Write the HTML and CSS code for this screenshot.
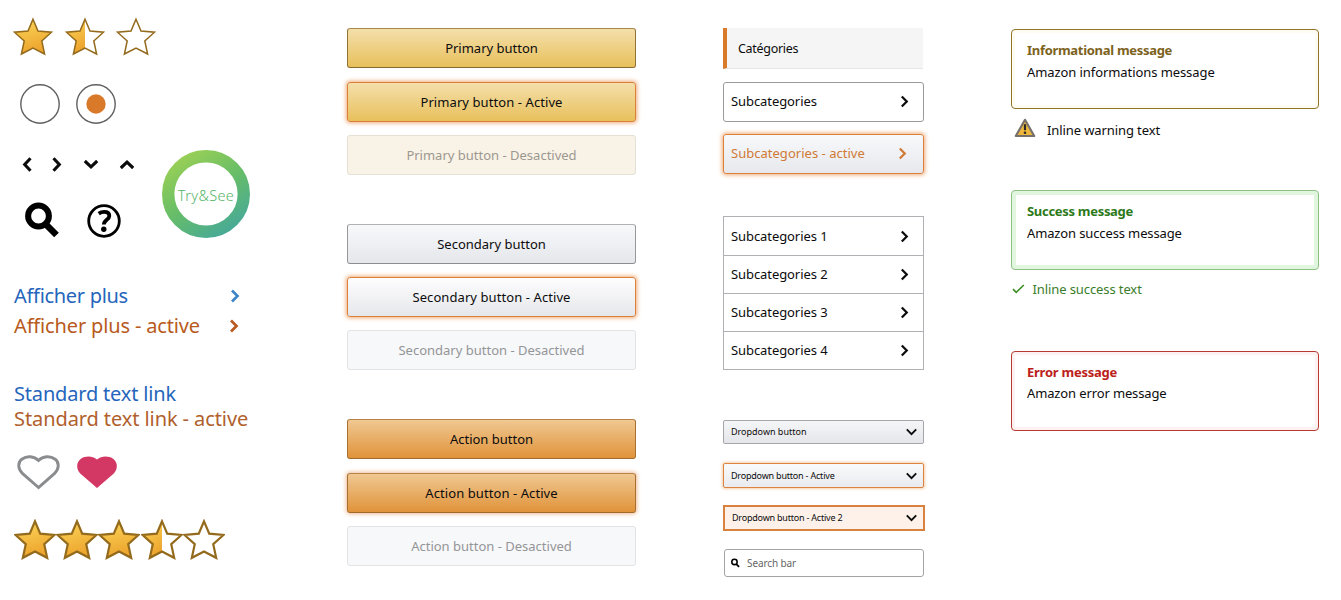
FILE: index.html
```
<!DOCTYPE html>
<html lang="fr">
<head>
<meta charset="utf-8">
<title>UI components</title>
<link rel="stylesheet" href="styles.css">
</head>
<body>
<svg class="defs" width="0" height="0" aria-hidden="true">
  <defs>
    <linearGradient id="gold" x1="0" y1="0" x2="0.3" y2="1"><stop offset="0" stop-color="#fbd65b"/><stop offset="1" stop-color="#eda52e"/></linearGradient>
    <linearGradient id="ring" gradientUnits="userSpaceOnUse" x1="18" y1="8" x2="66" y2="82"><stop offset="0" stop-color="#98cf56"/><stop offset="0.5" stop-color="#67bd68"/><stop offset="1" stop-color="#48aa96"/></linearGradient>
    <path id="star-shape" d="M20 2.200 25 14 38.500 15.200 28.800 24 31.600 37 20 31 8.400 37 11.200 24 1.500 15.200 15 14Z"/>
    <path id="star-half" d="M20 2.200V31L8.400 37 11.200 24 1.500 15.200 15 14Z"/>
    <symbol id="star-full-i" viewBox="0 0 40 40"><use href="#star-shape" fill="url(#gold)" stroke="#946a1c"/></symbol>
    <symbol id="star-half-i" viewBox="0 0 40 40"><use href="#star-half" fill="url(#gold)"/><use href="#star-shape" fill="none" stroke="#946a1c"/></symbol>
    <symbol id="star-empty-i" viewBox="0 0 40 40"><use href="#star-shape" fill="none" stroke="#946a1c"/></symbol>
    <symbol id="chev" viewBox="0 0 10 14"><path d="M2 1.500 7.500 7 2 12.500" fill="none" stroke="currentColor"/></symbol>
    <symbol id="chev-wide" viewBox="0 0 10 15"><path d="M1.500 1.300 7.300 7.500 1.500 13.700" fill="none" stroke="currentColor"/></symbol>
    <symbol id="mag" viewBox="0 0 35 36"><circle cx="13.500" cy="14" r="10.400" fill="none" stroke="currentColor" stroke-width="6"/><path d="M20.500 22 31.500 33" stroke="currentColor" stroke-width="6.600"/></symbol>
  </defs>
</svg>
<main class="board">
  <section class="col-icons">
    <div class="stars stars-thin">
      <svg><use href="#star-full-i"/></svg><svg><use href="#star-half-i"/></svg><svg><use href="#star-empty-i"/></svg>
    </div>
    <div class="radios">
      <svg viewBox="0 0 40 40"><circle class="radio-rim" cx="20" cy="20" r="19.200"/></svg>
      <svg viewBox="0 0 40 40"><circle class="radio-rim" cx="20" cy="20" r="19.200"/><circle cx="20" cy="20" r="9.700" fill="#d97a2b"/></svg>
    </div>
    <div class="glyphs">
      <div class="glyph-set">
        <div class="arrows">
          <svg class="chev left"><use href="#chev-wide"/></svg>
          <svg class="chev"><use href="#chev-wide"/></svg>
          <svg class="chev down"><use href="#chev-wide"/></svg>
          <svg class="chev up"><use href="#chev-wide"/></svg>
        </div>
        <div class="tools">
          <svg class="mag"><use href="#mag"/></svg>
          <svg class="help" viewBox="0 0 34 34"><circle cx="17" cy="17" r="15.300" fill="none" stroke="#000" stroke-width="2.800"/><path d="M11.700 9.600C13.600 8.300 15.400 7.900 17.200 7.900c3.300 0 5.100 1.500 5.100 4 0 3.800-5.400 3.900-5.400 8.500" fill="none" stroke="#000" stroke-width="3.800"/><circle cx="16.800" cy="25.200" r="2.700"/></svg>
        </div>
      </div>
      <div class="ring">
        <svg viewBox="0 0 88 88"><circle cx="44" cy="44" r="37.800" fill="none" stroke="url(#ring)" stroke-width="12.400"/></svg>
        <span>Try&amp;See</span>
      </div>
    </div>
    <div class="more"><span class="narrow">Afficher plus</span><svg class="chev"><use href="#chev"/></svg></div>
    <div class="more more-active"><span>Afficher plus - active</span><svg class="chev"><use href="#chev"/></svg></div>
    <div class="links">
      <a class="link">Standard text link</a>
      <a class="link link-active">Standard text link - active</a>
    </div>
    <div class="hearts">
      <svg class="heart" viewBox="0 0 43 36"><path d="M21.500 32.500 5.400 18.400C.6 13.500.7 7.400 4.800 4.200 9.800.6 17 1 21.500 5.500 26 1 33.200.6 38.200 4.200c4.100 3.200 4.200 9.300-.6 14.200Z" fill="none" stroke="#8a8c8e" stroke-width="2.900"/></svg>
      <svg class="heart-on" viewBox="0 0 40 33"><path d="M20 32 3.200 17.600C-1 13-.8 6.300 3.600 3 8.600-.4 15.500-.2 20 3.600 24.500-.2 31.400-.4 36.400 3c4.400 3.300 4.600 10 .4 14.600Z" fill="#d33865"/></svg>
    </div>
    <div class="stars stars-bold">
      <svg><use href="#star-full-i"/></svg><svg><use href="#star-full-i"/></svg><svg><use href="#star-full-i"/></svg><svg><use href="#star-half-i"/></svg><svg><use href="#star-empty-i"/></svg>
    </div>
  </section>

  <section class="col-buttons">
    <div class="group">
      <button class="btn primary">Primary button</button>
      <button class="btn primary glow">Primary button - Active</button>
      <button class="btn off off-cream">Primary button - Desactived</button>
    </div>
    <div class="group">
      <button class="btn secondary">Secondary button</button>
      <button class="btn secondary glow">Secondary button - Active</button>
      <button class="btn off">Secondary button - Desactived</button>
    </div>
    <div class="group">
      <button class="btn action">Action button</button>
      <button class="btn action glow-soft">Action button - Active</button>
      <button class="btn off">Action button - Desactived</button>
    </div>
  </section>

  <section class="col-menus">
    <h2 class="cat">Catégories</h2>
    <div class="sub sub-box"><span>Subcategories</span><svg class="chev"><use href="#chev"/></svg></div>
    <div class="sub sub-box sub-active"><span>Subcategories - active</span><svg class="chev"><use href="#chev"/></svg></div>
    <div class="sub-list">
      <div class="sub"><span>Subcategories 1</span><svg class="chev"><use href="#chev"/></svg></div>
      <div class="sub"><span>Subcategories 2</span><svg class="chev"><use href="#chev"/></svg></div>
      <div class="sub"><span>Subcategories 3</span><svg class="chev"><use href="#chev"/></svg></div>
      <div class="sub"><span>Subcategories 4</span><svg class="chev"><use href="#chev"/></svg></div>
    </div>
    <div class="drop"><span>Dropdown button</span><svg class="chev down"><use href="#chev"/></svg></div>
    <div class="drop drop-glow"><span>Dropdown button - Active</span><svg class="chev down"><use href="#chev"/></svg></div>
    <div class="drop drop-flat"><span>Dropdown button - Active 2</span><svg class="chev down"><use href="#chev"/></svg></div>
    <div class="search"><svg><use href="#mag"/></svg><span>Search bar</span></div>
  </section>

  <section class="col-messages">
    <div class="msg info"><strong>Informational message</strong><p>Amazon informations message</p></div>
    <div class="inline warn">
      <svg viewBox="0 0 22 20"><path d="M11 1.800 20.200 18H1.800Z" fill="#efb83c" stroke="#77716c" stroke-width="2.200" stroke-linejoin="round"/><path d="M11 6.200v6" stroke="#2d2a26" stroke-width="2.200"/><circle cx="11" cy="14.800" r="1.300" fill="#2d2a26"/></svg>
      <span>Inline warning text</span>
    </div>
    <div class="msg success"><strong>Success message</strong><p>Amazon success message</p></div>
    <div class="inline ok">
      <svg viewBox="0 0 13 10"><path d="M1 5.200 4.200 8.400 11.800 1" fill="none" stroke="#3f8f27" stroke-width="1.700"/></svg>
      <span>Inline success text</span>
    </div>
    <div class="msg error"><strong>Error message</strong><p>Amazon error message</p></div>
  </section>
</main>
</body>
</html>
```
FILE: styles.css
```
* { box-sizing: border-box; }
body {
  margin: 0;
  background: #fff;
  color: #0c0c0c;
  font: 13px/20px "Noto Sans", "Open Sans", sans-serif;
}
svg { display: block; flex: none; }
.defs { position: absolute; }
h2, p { margin: 0; font-weight: 400; }

.board {
  display: grid;
  grid-template-columns: 333px 376px 288px 308px;
  width: 1341px;
  height: 600px;
  padding-left: 14px;
  overflow: hidden;
}
.col-buttons { padding-top: 28px; }
.col-menus { padding-top: 28px; }
.col-messages { padding-top: 29px; }

/* Icons and links */
.col-icons { padding-top: 16.500px; }
.stars { display: flex; }
.stars-thin { gap: 11.700px; margin-left: -1px; }
.stars-thin svg { width: 40px; height: 40px; stroke-width: 1.500; }
.radios { display: flex; gap: 16px; margin: 27.700px 0 0 6.200px; }
.radios svg { width: 40px; height: 40px; }
.radio-rim { fill: none; stroke: #606060; stroke-width: 1.400; }
.glyphs { display: flex; margin-top: 25.800px; }
.glyph-set { width: 148px; }
.chev { width: 10px; height: 14px; stroke-width: 2.700; }
.left { transform: rotate(180deg); }
.down { transform: rotate(90deg); }
.up { transform: rotate(-90deg); }
.arrows { display: flex; padding: 7px 0 0 8px; }
.arrows .chev { height: 15px; stroke-width: 3.100; }
.arrows .chev:nth-child(2) { margin-left: 20px; }
.arrows .chev:nth-child(3) { margin-left: 24px; }
.arrows .chev:nth-child(4) { margin-left: 26px; }
.tools { display: flex; align-items: flex-end; gap: 27px; margin: 30px 0 0 11px; color: #000; }
.mag { width: 35px; height: 36px; }
.help { width: 34px; height: 34px; }
.ring { display: grid; place-items: center; width: 88px; height: 88px; }
.ring svg, .ring span { grid-area: 1 / 1; }
.ring svg { width: 88px; height: 88px; }
.ring span { padding-top: 2px; color: #55b567; font-size: 14.500px; font-weight: 300; letter-spacing: 0.350px; }
.more {
  display: flex;
  align-items: center;
  justify-content: space-between;
  width: 226px;
  height: 30px;
  color: #2565bb;
  font-size: 20px;
  letter-spacing: -0.150px;
}
.narrow { letter-spacing: -0.300px; }
.glyphs + .more { margin-top: 43px; }
.more .chev { color: #3f86c9; }
.more-active { width: 225px; }
.more-active, .more-active .chev { color: #b85a20; }
.links { display: grid; margin-top: 40px; }
.link { color: #2565bb; font-size: 20px; line-height: 25px; letter-spacing: -0.180px; white-space: nowrap; }
.link-active { color: #b0602c; letter-spacing: -0.090px; }
.hearts { display: flex; gap: 17px; margin: 24px 0 0 2.500px; }
.heart { width: 43px; height: 36px; }
.heart-on { width: 40px; height: 33px; margin-top: 1px; }
.stars-bold { gap: 0.400px; margin: 27.700px 0 0 -0.500px; }
.stars-bold svg { width: 42px; height: 42px; stroke-width: 2.100; }

/* Buttons */
.group { display: grid; gap: 13.500px; margin-bottom: 48.700px; }
.group:nth-child(2) { gap: 13px; margin-bottom: 49.700px; }
.btn {
  width: 289px;
  height: 40px;
  padding: 0;
  border: 1px solid;
  border-radius: 3px;
  color: #0c0c0c;
  font: inherit;
}
.primary { border-color: #a5884a #8e7236 #85692d; background: linear-gradient(#f4dfab, #e8c05c); }
.secondary { border-color: #b0b1b5 #97989c #8c8d91; background: linear-gradient(#f7f8fa, #e6e7eb); }
.action { border-color: #b78147 #a96f31 #a3682b; background: linear-gradient(#f0c892, #e0933a); }
.glow, .glow-soft { letter-spacing: 0.080px; }
.glow { border-color: #dc7f3a; box-shadow: 0 0 4px 1px #efab78; }
.secondary.glow { background: linear-gradient(#fdfdfe, #e6e7eb); }
.glow-soft { box-shadow: 0 0 4px 1px #f0bd98; }
.off { border-color: #e2e3e5; background: #f7f8fa; color: #949597; }
.off-cream { border-color: #e5e0d5; background: #f9f2e6; color: #9c9890; }

/* Menus */
.cat {
  height: 41px;
  width: 200px;
  padding-left: 11px;
  border-left: 4px solid #d97a2b;
  border-bottom: 1px solid #e6e6e6;
  background: #f5f5f5;
  font-size: 12.500px;
  line-height: 41px;
  letter-spacing: -0.300px;
}
.sub {
  display: flex;
  align-items: center;
  justify-content: space-between;
  width: 201px;
  letter-spacing: -0.080px;
}
.sub .chev { width: 9px; height: 13px; stroke-width: 2.500; }
.sub-box { height: 40px; margin-top: 13px; padding: 0 14px 2px 7px; border: 1px solid #9a9b9d; border-radius: 3px; }
.sub-active {
  margin-top: 12px;
  padding-right: 16px;
  border-color: #dc7f3a;
  background: linear-gradient(#f8f9fb, #e6e8ec);
  box-shadow: 0 0 4px 1px #efab78;
  color: #d07a35;
  letter-spacing: 0.020px;
}
.sub-list { width: 201px; margin-top: 42px; border: 1px solid #b0b1b4; }
.sub-list .sub { width: 199px; height: 38px; padding: 0 14px 1px 7px; }
.sub-list .sub:first-child { padding-bottom: 0; }
.sub-list .sub + .sub { border-top: 1px solid #b0b1b4; }
.drop {
  display: flex;
  align-items: center;
  justify-content: space-between;
  width: 201px;
  height: 24px;
  margin-top: 50px;
  padding: 0 7px;
  border: 1px solid #a5a6aa;
  border-radius: 2px;
  background: linear-gradient(#f5f6f8, #e5e6ea);
  font-size: 9px;
}
.drop .chev { width: 9px; height: 12px; stroke-width: 2.200; }
.drop-glow { height: 25px; margin-top: 19px; border-color: #dc8340; box-shadow: 0 0 3px 1px #f5d0ac; background: linear-gradient(#f9fafb, #e9ebef); letter-spacing: -0.200px; }
.drop-flat { width: 202px; height: 26px; margin-top: 17px; border: 2px solid #d9823f; border-radius: 0; background: #fdf1ea; letter-spacing: -0.210px; }
.search {
  display: flex;
  align-items: center;
  gap: 7px;
  width: 200px;
  height: 28px;
  margin: 18px 0 0 1px;
  padding-left: 6px;
  border: 1px solid #a3a4a6;
  border-radius: 3px;
  color: #666;
  font-size: 10px;
  letter-spacing: -0.100px;
}
.search svg { width: 9px; height: 10px; color: #000; }

/* Messages */
.msg { width: 308px; height: 80px; padding: 10px 15px; border: 1px solid; border-radius: 4px; line-height: 21.500px; letter-spacing: -0.130px; }
.msg strong { display: block; font-weight: 700; letter-spacing: -0.300px; }
.msg p { color: #0c0c0c; }
.info { border-color: #917427; box-shadow: inset 0 0 0 3px #fefbf2; color: #7c621d; }
.info p { letter-spacing: -0.080px; }
.success { margin-top: 48px; border-color: #8cc183; box-shadow: inset 0 0 0 4px #e0f6de; color: #2d7a1b; }
.error { margin-top: 49px; border-color: #b53a32; box-shadow: inset 0 0 0 3px #fdf1f1; color: #bb2019; line-height: 21px; }
.error strong { letter-spacing: -0.250px; }
.inline { display: flex; align-items: center; height: 24px; letter-spacing: -0.100px; }
.warn { gap: 11px; margin: 9px 0 0 3px; }
.warn svg { width: 22px; height: 20px; margin-top: -5px; }
.ok { gap: 7.500px; margin: 8px 0 0 1px; padding-bottom: 2px; color: #3a7d2b; }
.ok svg { width: 13px; height: 10px; }
```
